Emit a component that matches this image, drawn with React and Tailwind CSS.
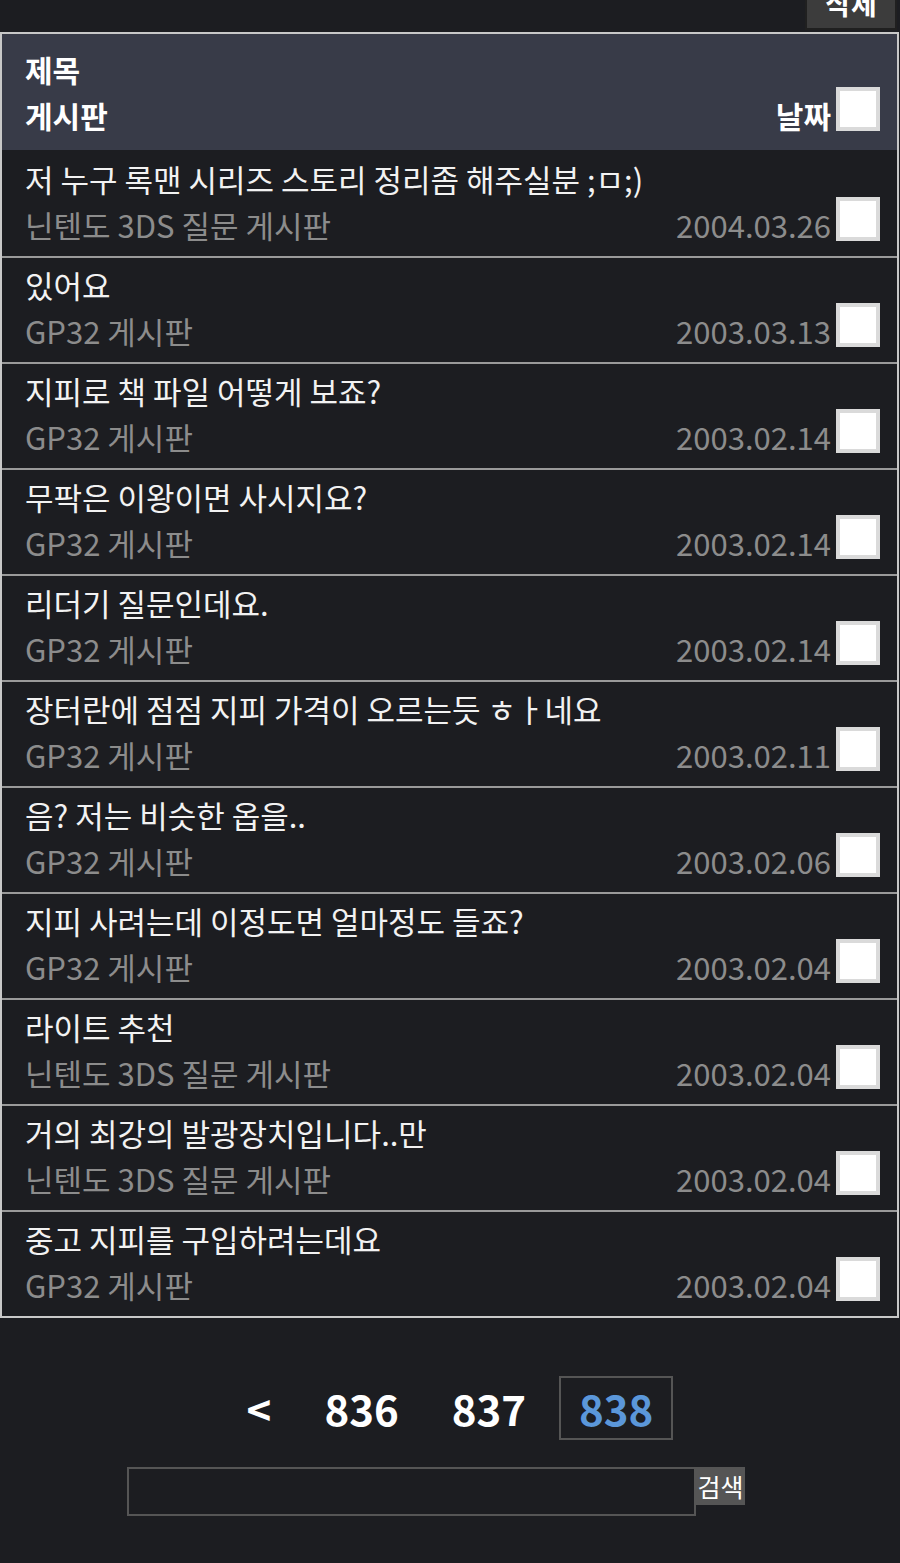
import React from "react";

const posts = [
	{ title: "저 누구 록맨 시리즈 스토리 정리좀 해주실분 ;ㅁ;)", board: "닌텐도 3DS 질문 게시판", date: "2004.03.26" },
	{ title: "있어요", board: "GP32 게시판", date: "2003.03.13" },
	{ title: "지피로 책 파일 어떻게 보죠?", board: "GP32 게시판", date: "2003.02.14" },
	{ title: "무팍은 이왕이면 사시지요?", board: "GP32 게시판", date: "2003.02.14" },
	{ title: "리더기 질문인데요.", board: "GP32 게시판", date: "2003.02.14" },
	{ title: "장터란에 점점 지피 가격이 오르는듯 ㅎㅏ네요", board: "GP32 게시판", date: "2003.02.11" },
	{ title: "음? 저는 비슷한 옵을..", board: "GP32 게시판", date: "2003.02.06" },
	{ title: "지피 사려는데 이정도면 얼마정도 들죠?", board: "GP32 게시판", date: "2003.02.04" },
	{ title: "라이트 추천", board: "닌텐도 3DS 질문 게시판", date: "2003.02.04" },
	{ title: "거의 최강의 발광장치입니다..만", board: "닌텐도 3DS 질문 게시판", date: "2003.02.04" },
	{ title: "중고 지피를 구입하려는데요", board: "GP32 게시판", date: "2003.02.04" },
];

const CheckBox = () => (
	<div className="w-[44px] h-[44px] shrink-0 border-[4px] border-[#dadada] bg-white -mt-[10px] mb-[2px]" />
);

const App = () => {
	return (
		<main
			className="min-h-[1563px] bg-[#1c1d21] overflow-hidden"
			style={{ fontFamily: '"Noto Sans CJK KR", "Noto Sans", sans-serif' }}
		>
			<div className="flex justify-end pr-[3px]">
				<button className="-mt-[24px] h-[54px] w-[92px] bg-[#3c3c3c] border-2 border-[#202020] text-white text-[28px] font-bold leading-none">
					삭제
				</button>
			</div>

			<div className="mt-[2px] border-2 border-[#c8c8c8] mr-[1px]">
				<div className="bg-[#383b48] pl-[23px] pr-[17px] pt-[12px] pb-[12px] text-white font-bold text-[30px] leading-[46px]">
					<div>제목</div>
					<div className="flex items-center">
						<div className="flex-1">게시판</div>
						<div className="mr-[5px]">날짜</div>
						<CheckBox />
					</div>
				</div>

				{posts.map((p, i) => (
					<div
						key={i}
						className={
							"border-t-2 pl-[23px] pr-[17px] pt-[4px] pb-[8px] text-[31px] leading-[46px] " +
							(i === 0 ? "border-[#1c1d21]" : "border-[#9a9a9a]")
						}
					>
						<div className="text-[#f2f2f2] whitespace-nowrap">{p.title}</div>
						<div className="flex items-center text-[#8c8c8c]">
							<div className="flex-1 whitespace-nowrap">{p.board}</div>
							<div className="mr-[5px]">{p.date}</div>
							<CheckBox />
						</div>
					</div>
				))}
			</div>

			<div className="mt-[58px] flex justify-center gap-[13px] text-[42px] font-bold leading-[60px]">
				<span className="px-[18px] border-2 border-transparent text-white">&lt;</span>
				<span className="px-[18px] border-2 border-transparent text-white">836</span>
				<span className="px-[18px] border-2 border-transparent text-white">837</span>
				<span className="px-[18px] border-2 border-[#555555] text-[#5b97da]">838</span>
			</div>

			<div className="mt-[27px] flex items-start pl-[127px]">
				<div className="w-[569px] h-[49px] border-2 border-[#555555] bg-[#1c1d21]" />
				<button className="w-[49px] h-[38px] bg-[#555555] text-white text-[25px] leading-[38px]">
					검색
				</button>
			</div>
		</main>
	);
};

export default App;
